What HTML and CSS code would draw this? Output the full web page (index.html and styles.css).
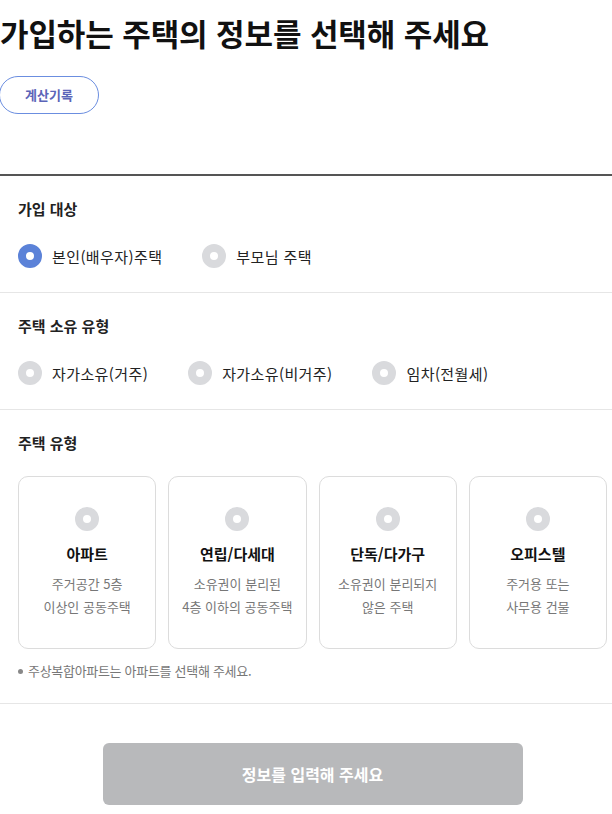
FILE: index.html
```html
<!DOCTYPE html>
<html lang="ko">
<head>
	<meta charset="UTF-8">
	<title>주택 정보 선택</title>
	<link rel="stylesheet" href="styles.css">
</head>
<body>
	<div class="head">
		<h1 class="title">가입하는 주택의 정보를 선택해 주세요</h1>
		<a href="javascript:void(0)" class="history_btn">계산기록</a>
	</div>
	<div class="sec">
		<p class="sec_tit">가입 대상</p>
		<div class="radios">
			<label class="radio on"><i></i>본인(배우자)주택</label>
			<label class="radio"><i></i>부모님 주택</label>
		</div>
	</div>
	<div class="sec">
		<p class="sec_tit">주택 소유 유형</p>
		<div class="radios">
			<label class="radio"><i></i>자가소유(거주)</label>
			<label class="radio"><i></i>자가소유(비거주)</label>
			<label class="radio"><i></i>임차(전월세)</label>
		</div>
	</div>
	<div class="sec sec_last">
		<p class="sec_tit">주택 유형</p>
		<ul class="cards">
			<li class="card"><i></i><strong>아파트</strong><span>주거공간 5층<br />이상인 공동주택</span></li>
			<li class="card"><i></i><strong>연립/다세대</strong><span>소유권이 분리된<br />4층 이하의 공동주택</span></li>
			<li class="card"><i></i><strong>단독/다가구</strong><span>소유권이 분리되지<br />않은 주택</span></li>
			<li class="card"><i></i><strong>오피스텔</strong><span>주거용 또는<br />사무용 건물</span></li>
		</ul>
		<p class="note">주상복합아파트는 아파트를 선택해 주세요.</p>
	</div>
	<div class="foot">
		<a href="javascript:void(0)" class="submit_btn">정보를 입력해 주세요</a>
	</div>
</body>
</html>
```

FILE: styles.css
```css
html,body{margin: 0;padding: 0;background: #fff;}
body,h1,p,ul,li,a,label,span,strong{margin: 0;padding: 0;font-family: "Noto Sans CJK KR","Noto Sans",sans-serif;color: #222;}
body{width: 612px;overflow: hidden;}

.head{padding: 12px 0 60px;border-bottom: 2px solid #555;}
.title{font-size: 31px;line-height: 42px;font-weight: 700;letter-spacing: -0.1px;color: #111;white-space: nowrap;}
a.history_btn{display: block;box-sizing: border-box;width: 100px;height: 38px;margin: 22px 0 0 -1px;line-height: 35px;border: 1px solid #6b8ee0;border-radius: 19px;text-align: center;font-size: 13px;font-weight: 700;color: #5b64b8;text-decoration: none;}

.sec{padding: 22px 5px 0 18px;border-bottom: 1px solid #e6e6e6;height: 94px;}
.sec_tit{font-size: 15px;line-height: 22px;font-weight: 700;color: #222;}
.radios{display: flex;margin-top: 24px;}
.radio{display: flex;align-items: center;height: 24px;font-size: 15px;letter-spacing: 0.4px;color: #222;margin-right: 40px;cursor: pointer;}
.radio i,.card i{display: block;box-sizing: border-box;width: 24px;height: 24px;border-radius: 50%;border: 8px solid #d9dadd;background: #fff;}
.radio i{margin-right: 10px;}
.radio.on i{border-color: #5b82d8;}

.sec_last{height: auto;padding-bottom: 21px;}
.cards{display: grid;grid-template-columns: repeat(4, 1fr);gap: 12px;margin-top: 22px;list-style: none;}
.card{box-sizing: border-box;height: 173px;border: 1px solid #dcdcdc;border-radius: 10px;display: flex;flex-direction: column;align-items: center;padding-top: 30px;text-align: center;}
.card strong{margin-top: 11px;font-size: 15px;line-height: 24px;font-weight: 700;color: #111;}
.card span{margin-top: 6px;font-size: 13px;line-height: 23px;color: #777;}
.note{position: relative;margin-top: 11px;padding-left: 10px;font-size: 13px;line-height: 22px;color: #777;letter-spacing: -0.3px;}
.note:before{content: "";position: absolute;left: 0;top: 9px;width: 5px;height: 5px;border-radius: 50%;background: #888;}

.foot{padding: 39px 5px 0 18px;}
a.submit_btn{display: block;width: 420px;height: 62px;margin: 0 auto;line-height: 62px;border-radius: 6px;background: #b8b9bb;text-align: center;font-size: 16px;font-weight: 700;color: #fff;text-decoration: none;}
```
